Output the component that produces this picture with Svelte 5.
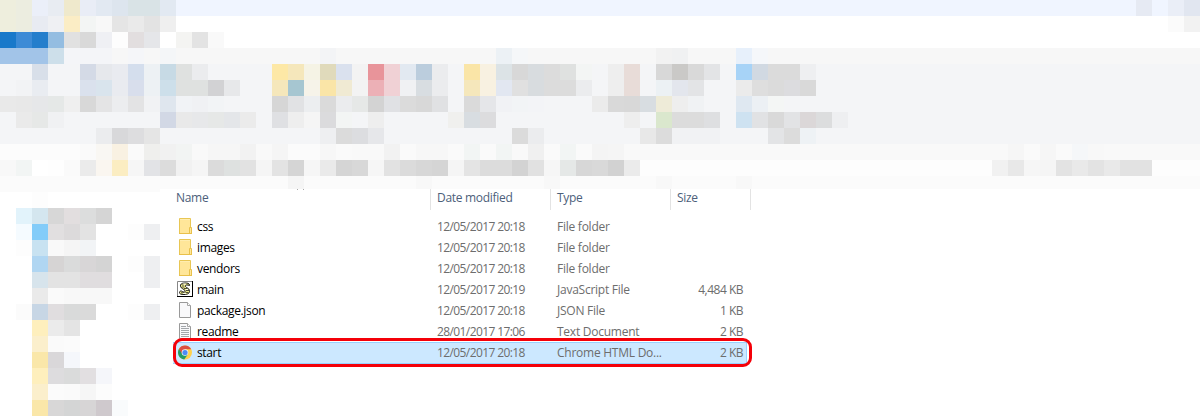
<script>
  // Each strip: base colour, height, and runs "column:colour colour …" of 16px tiles ("-" keeps the base).
  const top = [
    ['f0f5ff', 16, '0:eeeedd ecede0 ebeff9 e8ecf2 efe9cc e9edf6 e2e9f2 dde5ee d9e3e6 d9e3e6 e2e9f2', '71:e6eaf3 - eaeef7 e1e6f0'],
    ['ffffff', 16, '0:eeeedd ecede0 e8ebf2 eff0f3 fbedc5 f3f5f4 f8f8f8 e5e5e5 eaeaea e3e3e3 efefef', '73:fbfbfb f2f2f2'],
    ['ffffff', 16, '0:1979ca 3d8bd6 247ecc 94bde1 e1e1e1 d9d9d9 eff0f4 fdfdfd e2dedf e5e6e9 - f4f4f2 e3e3e3 f9f9f9'],
    ['f7f7f7', 16, '0:a2c4e8 a2c4e8 a2c4e8 cddfea f4f5f8 f4f5f8 f4f5f8 - f5f6f9 - f4f6f8', '20:f3f4f6', '31:ecf1f5 f5f7f9', '41:f2f2f2 f0f1f2', '46:e7f0fb f5f7fa'],
    ['f4f5f7', 16, '2:d8dfe9 - - d4dae6 e6e8ec e9ebf0 d4deed edf1f4 c7dae5 dfe1e0 ebecee', '17:fde8a6 f5e7bb f5f3e5 e0dabb dae1ee f3f3f3 e8949a f0d1d5 e2e9f1 bbcddd ebecee - fae5a7 f8f1e1 dce3e6 d8d8d8 d8dcdf dcdcdc dfe1e0 f3f5f4 - eeeeee e8dcd8 - d8d8d8 cac9c7 d9d9d9 e3e4e6 - a7d3f7 d1d9e2 dbdbdb dbdbdb eeeff1'],
    ['f4f5f7', 16, '1:f2f3f5 e9ecf1 - - dae1ed d9e4ed e9ebf0 d8deec edf1f4 cddfea dfe1e0 dfe1e0 d2d2d4 e7e8ea', '17:f5e7bb a6c6d1 f6f3e9 fae5a7 f0ead3 f3f3f3 ecb0b6 f0d1d5 f0f1f3 d8dde1 ebecee - f5e7bb f8f1e1 e2e7f1 e0e0e0 d8dcdf dcdcdc dcdcdc ebecee - eeeeee e8dcd8 - ecf1f4 e3e6ed e3e4e6 - - ebebeb dedede dbdbdb dcdcdf d9d9d9'],
    ['f4f5f7', 16, '0:e9e9e9 e8e8e8 e6e7e9 e5e8e7 efefef d8d8d8 e4e4e5 ecedef e3e3e4 f1f2f4 dfe6ee f1f3f6 f0f1f4 f2f4f6', '17:d6d6d6 e1e2e4 eceef0 dadada ebecee e6e8e7 d3d3d3 e0e1e4 dbdbdb d8d8d8 e0e1e3 - dadada e5e6e9 f1f2f5 f2f4f6 f3f4f7', '37:ebebeb d9d9d9 d8d8d8 d8dde1 eeebd8 eeeeee f0f2f4 - - dfe8f1 ecf0f4 f4f6f5'],
    ['f4f5f7', 16, '1:eaeaea e6e8e7 f0f1f3', '10:d2d8e5 e9e9e9 e7e8ea e6e8e7 e4e6e9 ebebeb', '17:dfe0e3 eeeeee f5f5f5 dbdbdd f3f5f4 - eeeeee', '28:f0f0ee d8dde1 dcdcde', '39:eeeeee - dae7cd dcdcdc dcdcdc dedfe1 - cee2f1 e1e2e4 d9d9d9 e2e3e5 dbd7d8 dcddde eeeff1'],
    ['f4f5f7', 16, '6:ebecee d8d8da dddddf e5e5e5', '20:eeeff1 dbdbdb dcdde0 e6e7ea', '32:dbdbdb ebecee', '39:- e8e8e8 dcdcdc f1f2f4 f1f2f4 f1f2f4', '48:e3e4e6 dcdcdc eef2f5'],
    ['f9f9f9', 16, '0:fcfcfc fcfcfc fcfcfc fcfcfc fcfcfc fafafa f9f7f3 f9f1e2 fafafa efefed f1f1f1 f2f4f3 - f6f6f6 f6f6f6 f2f2f2 - f5f5f5 fbfbfb fbfbfb f7f7f7 fafafa - - f2f2f2 fafafa f7f7f7 f7f7f7 fafafa f2f5f4 fafafa f2f5f4 - f0f0f0 fafafa f2f5f4 fafafa f4f4f4 f5f5f5', '63:f6f6f6 fafafa f6f6f6 fafafa f5f7f9 f8f8f8'],
    ['fdfdfd', 16, '0:f8f8f8 f2f5f4 ffffff fefefe fafafa ebebeb faf6f0 fbedc2 f6f6f6 e2e3e6 dcdcdc f1f1f1 f5f5f5 dbdbdb dee1e0 e2e2e2 f5f5f5 e3e3e3 d5d5d5 f6f6f6 eaeaea d5d5d5 d8d8d8 f6f6f6 e2e2e2 dbdbdb d7d7d7 d5d5d5 f5f5f5 e4e4e4 dcdcdc dcdcdc d3d3d3 e1e1e1 f6f6f6 e5e8e7 d7d7d7 d9d9d9 d2d2d2 ebebeb', '62:f1f1f1 e8e8e8 f6f6f6 f5f5f5 e3e3e3 e9e9e9 e3e3e3 e9e9e9 e2e2e2 e2e2e2'],
    ['fbfbfb', 13, '18:f5f5f5', '26:f8f8f8', '34:f8f8f8', '41:f8f8f8', '46:f8f8f8'],
  ];
  const side = [
    ['fbfbfb', 3],
    ['ffffff', 16, '2:fdfdfd'],
    ['ffffff', 16, '1:e2f3fb d4e6ef d7d7d7 e2dedf dcdddd d5d5d5'],
    ['ffffff', 16, '1:f5fbff 83ccf9 e1dfe0 dcdadb e3e3e3', '8:fdfdfd eeeff1'],
    ['ffffff', 16, '1:fdfdfd c8e2f1 f9f9f9 f5f5f5 f2f4f6'],
    ['ffffff', 16, '2:b0d6f2 d6d4d4 dadbdb d8d6d7 d4d4d4', '8:fdfdfd eeeff1'],
    ['ffffff', 16, '2:d7e4ec e3e3e3 e3e3e3 e0dddf e0dddf', '9:eeeff1'],
    ['ffffff', 16, '2:eaeaea fafafa f8f8f8 f8f8f8 f8f8f8'],
    ['ffffff', 16, '1:fbfbfb c7d6e5 e0dddf d9dada dadada', '8:fdfdfd eeeff1'],
    ['ffffff', 16, '2:feefbd ebebeb e4e4e4'],
    ['ffffff', 16, '2:fbefcc fafafa fbfbfb'],
    ['ffffff', 16, '2:fae7a9 d9d7d9 f5f7fb'],
    ['ffffff', 16, '2:feefbd dddcde dadbdb e2dfe1 f5f6fa'],
    ['ffffff', 16, '2:fbefcc fbfbfb fafafa f6f6f6 fcfcfc'],
    ['ffffff', 16, '2:fae7a9 d8d7d7 d4d5d5 d7d5d6 cfc9cd f9fbfc'],
  ];
  const expand = ([base, height, ...runs]) => ({
    base,
    height,
    cells: runs.flatMap((run) => {
      const [start, list] = run.split(':');
      return list.split(' ').map((c, i) => ({ col: +start + i + 1, c })).filter((t) => t.c !== '-');
    }),
  });
  const topRows = top.map(expand);
  const sideRows = side.map(expand);

  const files = [
    { icon: 'folder', name: 'css', date: '12/05/2017 20:18', type: 'File folder', size: '' },
    { icon: 'folder', name: 'images', date: '12/05/2017 20:18', type: 'File folder', size: '' },
    { icon: 'folder', name: 'vendors', date: '12/05/2017 20:18', type: 'File folder', size: '' },
    { icon: 'script', name: 'main', date: '12/05/2017 20:19', type: 'JavaScript File', size: '4,484 KB' },
    { icon: 'page', name: 'package.json', date: '12/05/2017 20:18', type: 'JSON File', size: '1 KB' },
    { icon: 'text', name: 'readme', date: '28/01/2017 17:06', type: 'Text Document', size: '2 KB' },
    { icon: 'chrome', name: 'start', date: '12/05/2017 20:18', type: 'Chrome HTML Do...', size: '2 KB', selected: true },
  ];
</script>

{#snippet strip(row)}
  <div class="strip" style="background:#{row.base};height:{row.height}px">
    {#each row.cells as t}
      <i style="grid-column:{t.col};background:#{t.c}"></i>
    {/each}
  </div>
{/snippet}

<div class="window">
  <header>
    {#each topRows as row}{@render strip(row)}{/each}
  </header>
  <div class="body">
    <nav>
      {#each sideRows as row}{@render strip(row)}{/each}
    </nav>
    <main>
      <div class="head">
        <span class="name">Name</span><span>Date modified</span><span>Type</span><span class="last">Size</span>
        <svg class="sort" width="9" height="1" viewBox="0 0 9 1"><path d="M1 0h1v1H1zM7 0h1v1H7z" fill="#aaa" /></svg>
      </div>
      {#each files as f}
        <div class="row" class:selected={f.selected}>
          <span class="icon">
            {#if f.icon === 'folder'}
              <svg width="18" height="18" viewBox="0 0 18 18">
                <path d="M3.5 1.5h11v15h-11z" fill="#ffe699" stroke="#e8c654" />
                <path d="M4 2h10v1H4z" fill="#ffedb0" />
                <path d="M13.5 10.5h2v6h-2z" fill="#ffe79b" stroke="#e8c14d" />
                <path d="M3 16h13v1H3z" fill="#e9c04a" />
              </svg>
            {:else if f.icon === 'script'}
              <svg width="18" height="18" viewBox="0 0 18 18">
                <path d="M1.5 1.5h15v15h-15z" fill="#fff" stroke="#868686" />
                <path d="M17 1v16H1v-1h15V1z" fill="#000" />
                <path d="M13.500 5.500C13.500 3 11.500 3 8.500 3 5.500 3 4 4.500 4.500 6.500S8 9 9 10.500 8 12.500 6.500 11.500 3.500 11 3.500 12.500 5 14.500 8 14.500c4 0 6-1.500 5.500-4S10.500 8 9.500 6.500 11 4.500 13.500 5.500z" fill="#f3f08d" stroke="#111" />
                <path d="M6 5h2M5.500 7h3M8 8.500h3.500M10 10.500h3M9.500 12.500h3M5 12.800h3" stroke="#222" stroke-width=".8" />
                <path d="M7 4h3M10 9.500h2M7 13.500h3" stroke="#fff" stroke-width=".8" />
              </svg>
            {:else if f.icon === 'chrome'}
              <svg width="18" height="18" viewBox="0 0 18 18">
                <circle cx="9" cy="9.500" r="7" fill="#ffd14d" />
                <path d="M9 9.500 2.940 6A7 7 0 0 0 8.200 16.450L12 11.200z" fill="#259b65" />
                <path d="M9 6.300h6.220A7 7 0 0 0 2.940 6L6.200 11.100 9 9.500z" fill="#db4f42" />
                <circle cx="9" cy="9.500" r="3.300" fill="#f2f5f8" />
                <circle cx="9" cy="9.500" r="2.600" fill="#4c8bf5" />
              </svg>
            {:else}
              <svg width="18" height="18" viewBox="0 0 18 18">
                <path d="M3.500 1.500h8l3 3v12h-11z" fill="#f8f8fa" stroke="#999" />
                <path d="M11.500 1.500v3h3" fill="#fff" stroke="#a5a5a5" />
                {#if f.icon === 'text'}
                  <path d="M5 4.500h5M5 6.500h8M5 8.500h8M5 10.500h8M5 12.500h8M5 14.500h8" stroke="#a2a6aa" />
                {/if}
              </svg>
            {/if}
          </span>
          <span class="name">{f.name}</span>
          <span class="date">{f.date}</span>
          <span class="type">{f.type}</span>
          <span class="size">{f.size}</span>
          {#if f.selected}<b class="frame"></b>{/if}
        </div>
      {/each}
    </main>
  </div>
</div>

<style>
  :global(body) { margin: 0; background: #fff; }
  .window { width: 1200px; height: 416px; overflow: hidden; background: #fff; font: 12px/19px "Open Sans", "Noto Sans", sans-serif; }
  .strip { display: grid; grid-template-columns: repeat(auto-fill, 16px); grid-auto-flow: column; }
  .strip i { grid-row: 1; height: 100%; }
  .body { display: flex; }
  nav { width: 160px; flex: none; }
  main { width: 591px; padding-left: 13px; box-sizing: border-box; }
  .head { position: relative; display: grid; grid-template-columns: 258px 120px 120px 80px; height: 21px; margin-bottom: 7px; color: #4c607a; line-height: 17px; letter-spacing: -0.3px; }
  .head span { border-right: 1px solid #e3e3e3; padding-left: 6px; }
  .head .name { padding-left: 3px; }
  .sort { position: absolute; left: 123px; top: 0; }
  .row { position: relative; display: grid; grid-template-columns: 24px 240px 120px 120px 66px; height: 21px; width: 574px; color: #6d6d6d; white-space: nowrap; }
  .row .icon { padding-left: 3px; height: 18px; line-height: 0; }
  .row .name { color: #000; letter-spacing: -0.35px; }
  .date { letter-spacing: -0.6px; }
  .type { letter-spacing: -0.25px; }
  .size { text-align: right; letter-spacing: -0.5px; }
  .selected { background: #cce8ff; box-shadow: inset -1px -1px #99d1ff, 0 -1px #99d1ff; }
  .frame { position: absolute; left: 0; top: -5px; width: 579px; height: 29px; box-sizing: border-box; border: 3px solid #f40009; border-radius: 9px; }
</style>
